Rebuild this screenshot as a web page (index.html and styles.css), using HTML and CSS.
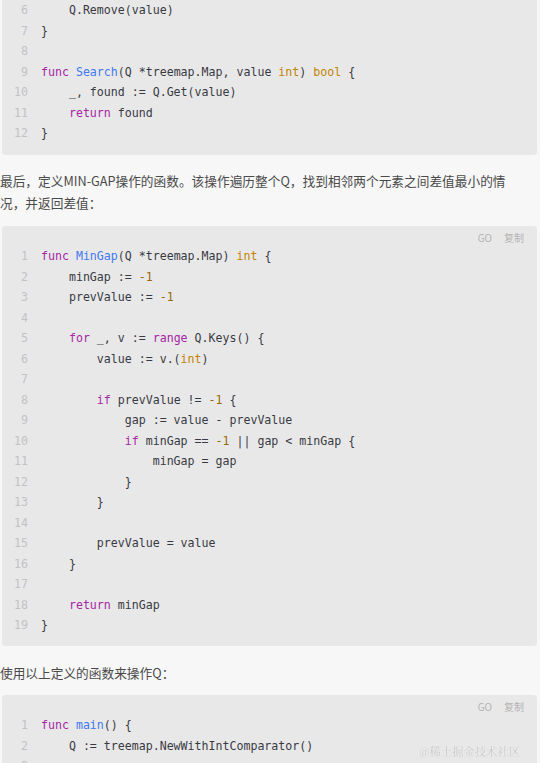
FILE: index.html
```html
<!DOCTYPE html>
<html lang="zh-CN">
<head>
<meta charset="utf-8">
<title>MIN-GAP</title>
<link rel="stylesheet" href="styles.css">
</head>
<body>
<div class="article">
  <div class="code cut">
    <div class="lines">
      <div class="row"><span class="ln">6</span><span class="src">    Q.Remove(value)</span></div>
      <div class="row"><span class="ln">7</span><span class="src">}</span></div>
      <div class="row"><span class="ln">8</span><span class="src"></span></div>
      <div class="row"><span class="ln">9</span><span class="src"><span class="kw">func</span> <span class="fn">Search</span>(Q *treemap.Map, value <span class="ty">int</span>) <span class="ty">bool</span> {</span></div>
      <div class="row"><span class="ln">10</span><span class="src">    _, found := Q.Get(value)</span></div>
      <div class="row"><span class="ln">11</span><span class="src">    <span class="kw">return</span> found</span></div>
      <div class="row"><span class="ln">12</span><span class="src">}</span></div>
    </div>
  </div>

  <p class="para">最后，定义MIN-GAP操作的函数。该操作遍历整个Q，找到相邻两个元素之间差值最小的情况，并返回差值：</p>

  <div class="code">
    <div class="head"><span>GO</span><span>复制</span></div>
    <div class="lines">
      <div class="row"><span class="ln">1</span><span class="src"><span class="kw">func</span> <span class="fn">MinGap</span>(Q *treemap.Map) <span class="ty">int</span> {</span></div>
      <div class="row"><span class="ln">2</span><span class="src">    minGap := <span class="nu">-1</span></span></div>
      <div class="row"><span class="ln">3</span><span class="src">    prevValue := <span class="nu">-1</span></span></div>
      <div class="row"><span class="ln">4</span><span class="src"></span></div>
      <div class="row"><span class="ln">5</span><span class="src">    <span class="kw">for</span> _, v := <span class="kw">range</span> Q.Keys() {</span></div>
      <div class="row"><span class="ln">6</span><span class="src">        value := v.(<span class="ty">int</span>)</span></div>
      <div class="row"><span class="ln">7</span><span class="src"></span></div>
      <div class="row"><span class="ln">8</span><span class="src">        <span class="kw">if</span> prevValue != <span class="nu">-1</span> {</span></div>
      <div class="row"><span class="ln">9</span><span class="src">            gap := value - prevValue</span></div>
      <div class="row"><span class="ln">10</span><span class="src">            <span class="kw">if</span> minGap == <span class="nu">-1</span> || gap &lt; minGap {</span></div>
      <div class="row"><span class="ln">11</span><span class="src">                minGap = gap</span></div>
      <div class="row"><span class="ln">12</span><span class="src">            }</span></div>
      <div class="row"><span class="ln">13</span><span class="src">        }</span></div>
      <div class="row"><span class="ln">14</span><span class="src"></span></div>
      <div class="row"><span class="ln">15</span><span class="src">        prevValue = value</span></div>
      <div class="row"><span class="ln">16</span><span class="src">    }</span></div>
      <div class="row"><span class="ln">17</span><span class="src"></span></div>
      <div class="row"><span class="ln">18</span><span class="src">    <span class="kw">return</span> minGap</span></div>
      <div class="row"><span class="ln">19</span><span class="src">}</span></div>
    </div>
  </div>

  <p class="para second">使用以上定义的函数来操作Q：</p>

  <div class="code">
    <div class="head"><span>GO</span><span>复制</span></div>
    <div class="lines">
      <div class="row"><span class="ln">1</span><span class="src"><span class="kw">func</span> <span class="fn">main</span>() {</span></div>
      <div class="row"><span class="ln">2</span><span class="src">    Q := treemap.NewWithIntComparator()</span></div>
      <div class="row"><span class="ln">3</span><span class="src"></span></div>
    </div>
  </div>
</div>
<div class="watermark">@稀土掘金技术社区</div>
</body>
</html>
```

FILE: styles.css
```css
html, body {
  margin: 0;
  padding: 0;
  background: #f7f7f7;
}

body {
  width: 540px;
  height: 763px;
  overflow: hidden;
  font-family: "Noto Sans CJK SC", "Noto Sans", sans-serif;
}

.article {
  display: flex;
  flex-direction: column;
}

.code {
  margin: 0 3px 0 2px;
  background: #e8e8e9;
  border-radius: 4px;
  padding-bottom: 10.5px;
}

.code.cut {
  border-top-left-radius: 0;
  border-top-right-radius: 0;
  padding-bottom: 11.5px;
}

.head {
  height: 20px;
  padding-top: 2px;
  box-sizing: border-box;
  display: flex;
  justify-content: flex-end;
  align-items: center;
  gap: 12px;
  padding-right: 13px;
  font-size: 10px;
  color: #b3b3b3;
}

.lines {
  display: flex;
  flex-direction: column;
}

.row {
  display: flex;
  height: 20.5px;
  line-height: 20.5px;
  font-family: "DejaVu Sans Mono", "Liberation Mono", monospace;
  font-size: 11.6px;
  color: #383a42;
}

.ln {
  width: 26px;
  flex: none;
  text-align: right;
  margin-right: 13px;
  color: #c2c2c4;
}

.src {
  white-space: pre;
}

.kw { color: #a626a4; }
.fn { color: #4078f2; }
.ty { color: #c18401; }
.nu { color: #986801; }

.para {
  margin: 15px 0 12px 0;
  max-width: 506px;
  font-size: 12.7px;
  line-height: 22px;
  color: #4a4a4a;
}

.para.second {
  margin: 16px 0 11px 0;
}

.watermark {
  position: fixed;
  right: 20px;
  bottom: 3px;
  font-family: "Noto Serif CJK SC", "Noto Sans CJK SC", serif;
  font-size: 11.3px;
  line-height: 18px;
  color: #c6c6c8;
  text-shadow: 0 0 1px #ffffff;
}
```
